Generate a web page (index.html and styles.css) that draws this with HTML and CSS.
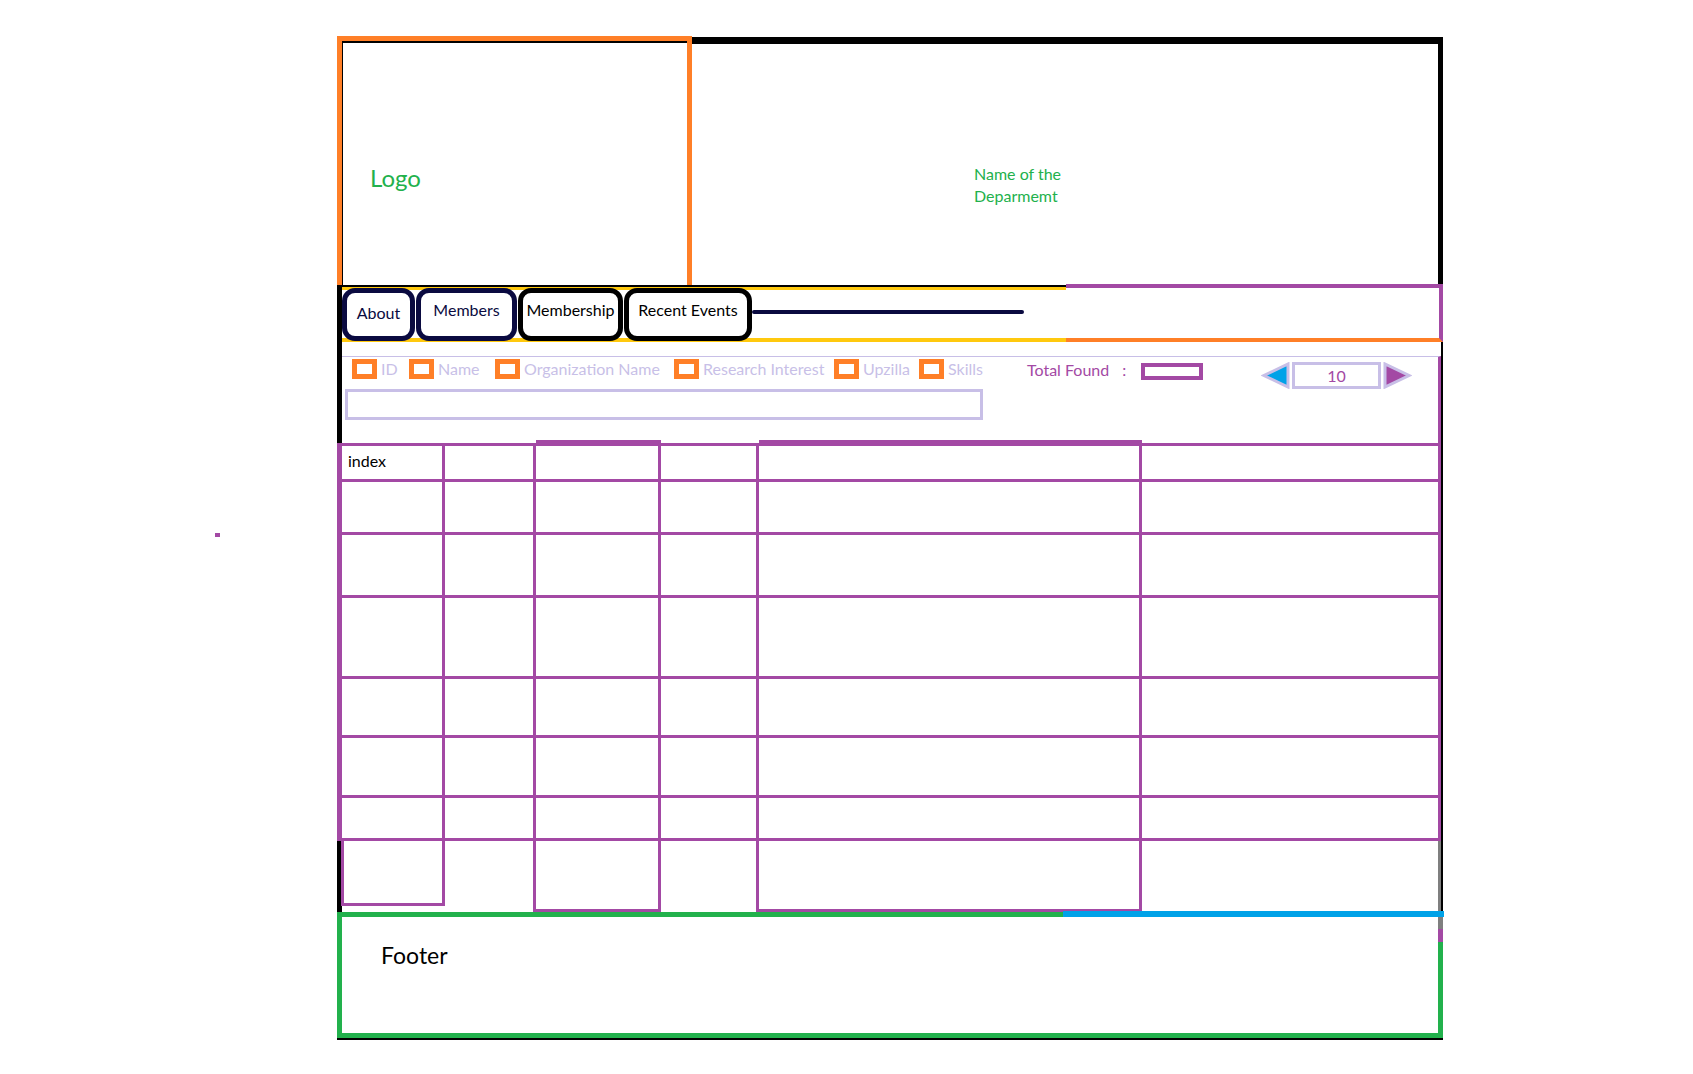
FILE: index.html
```html
<!DOCTYPE html>
<html lang="en">
<head>
<meta charset="utf-8">
<title>Department Members</title>
<link rel="stylesheet" href="styles.css">
</head>
<body>
<div class="dot"></div>
<div class="page">
  <header class="header">
    <div class="logo">Logo</div>
    <div class="dept">Name of the<br>Deparmemt</div>
  </header>
  <nav class="nav">
    <div class="tabs">
      <a class="tab tab-about navy">About</a>
      <a class="tab tab-members navy">Members</a>
      <a class="tab tab-membership">Membership</a>
      <a class="tab tab-events">Recent Events</a>
      <span class="nav-line"></span>
    </div>
    <div class="nav-right"></div>
  </nav>
  <main class="main">
    <section class="filters">
      <div class="filter-row">
        <label class="opt w-id"><span class="box"></span><span class="lbl">ID</span></label>
        <label class="opt w-name"><span class="box"></span><span class="lbl">Name</span></label>
        <label class="opt w-org"><span class="box"></span><span class="lbl">Organization Name</span></label>
        <label class="opt w-res"><span class="box"></span><span class="lbl">Research Interest</span></label>
        <label class="opt w-upz"><span class="box"></span><span class="lbl">Upzilla</span></label>
        <label class="opt w-skl"><span class="box"></span><span class="lbl">Skills</span></label>
        <span class="total">Total Found<span class="colon">:</span></span>
        <span class="found"></span>
        <div class="pager">
          <svg class="arrow" width="29" height="27" viewBox="0 0 29 27"><polygon points="27,2 27,25 3,13.5" fill="#00a2e8" stroke="#c8bfe7" stroke-width="3"/></svg>
          <span class="page-num">10</span>
          <svg class="arrow" width="29" height="27" viewBox="0 0 29 27"><polygon points="2,2 2,25 26,13.5" fill="#a349a4" stroke="#c8bfe7" stroke-width="3"/></svg>
        </div>
      </div>
      <div class="search"></div>
    </section>
    <div class="grid">
      <div class="cell top first">index</div><div class="cell top"></div><div class="cell top thick"></div><div class="cell top"></div><div class="cell top thick"></div><div class="cell top"></div>
      <div class="cell first"></div><div class="cell"></div><div class="cell"></div><div class="cell"></div><div class="cell"></div><div class="cell"></div>
      <div class="cell first"></div><div class="cell"></div><div class="cell"></div><div class="cell"></div><div class="cell"></div><div class="cell"></div>
      <div class="cell first"></div><div class="cell"></div><div class="cell"></div><div class="cell"></div><div class="cell"></div><div class="cell"></div>
      <div class="cell first"></div><div class="cell"></div><div class="cell"></div><div class="cell"></div><div class="cell"></div><div class="cell"></div>
      <div class="cell first"></div><div class="cell"></div><div class="cell"></div><div class="cell"></div><div class="cell"></div><div class="cell"></div>
      <div class="cell first"></div><div class="cell"></div><div class="cell"></div><div class="cell"></div><div class="cell"></div><div class="cell"></div>
      <div class="cell short"></div><div class="cell open"></div><div class="cell"></div><div class="cell open"></div><div class="cell"></div><div class="cell open last"></div>
    </div>
  </main>
  <footer class="footer">Footer</footer>
</div>
</body>
</html>
```

FILE: styles.css
```css
* { box-sizing: border-box; }

html, body {
  margin: 0;
  padding: 0;
  background: #ffffff;
}

body {
  position: relative;
  font-family: "Lato", "Open Sans", "Liberation Sans", sans-serif;
  color: #000;
  height: 1074px;
  overflow: hidden;
}

.dot {
  position: absolute;
  left: 215px;
  top: 533px;
  width: 5px;
  height: 4px;
  background: #a349a4;
}

.page {
  margin-left: 337px;
  padding-top: 36px;
  width: 1106px;
}

/* Header */
.header {
  display: flex;
  height: 251px;
  border-bottom: 2px solid #000;
}

.logo {
  width: 355px;
  border: 5px solid #ff7f27;
  border-bottom: none;
  box-shadow: inset 1px 0 0 #000, inset 0 2px 0 #000;
  padding: 122px 0 0 28px;
  font-size: 24px;
  line-height: 30px;
  color: #22b14c;
}

.dept {
  flex: 1;
  margin-top: 1px;
  border-top: 7px solid #000;
  border-right: 5px solid #000;
  padding: 119px 0 0 282px;
  font-size: 16px;
  line-height: 22px;
  color: #22b14c;
}

/* Nav */
.nav {
  display: flex;
  height: 55px;
}

.tabs {
  width: 729px;
  display: flex;
  align-items: flex-start;
  gap: 1px;
  border-left: 5px solid #000;
  background: linear-gradient(to bottom, #ffc90e 0 3px, transparent 3px 51px, #ffc90e 51px 55px);
}

.tab {
  display: block;
  margin-top: 1px;
  height: 53px;
  border: 5px solid #000;
  border-radius: 13px;
  background: #fff;
  text-align: center;
  padding-top: 7px;
  font-size: 16px;
  line-height: 20px;
  color: #000;
  cursor: pointer;
}

.tab.navy {
  border-color: #0a0a40;
  color: #0a0a40;
}

.tab-about { width: 73px; padding-top: 10px; }
.tab-members { width: 101px; }
.tab-membership { width: 105px; }
.tab-events { width: 128px; }

.nav-line {
  display: block;
  width: 272px;
  height: 4px;
  margin-top: 23px;
  margin-left: -1px;
  background: #0a0a40;
  border-radius: 2px;
}

.nav-right {
  flex: 1;
  margin-top: -3px;
  height: 58px;
  border-top: 4px solid #a349a4;
  border-right: 4px solid #a349a4;
  border-bottom: 4px solid #ff7f27;
}

/* Main */
.main {
  display: flow-root;
  padding-top: 14px;
  border-left: 5px solid #000;
  border-right: 2px solid #000;
}

.filters {
  border-top: 1px solid #c8bfe7;
  border-right: 3px solid #a349a4;
  padding-bottom: 23px;
}

.filter-row {
  display: flex;
  align-items: flex-start;
  height: 32px;
  padding-left: 10px;
}

.opt {
  display: flex;
  align-items: flex-start;
  gap: 4px;
}

.w-id { width: 57px; }
.w-name { width: 86px; }
.w-org { width: 179px; }
.w-res { width: 160px; }
.w-upz { width: 85px; }
.w-skl { width: 108px; }

.box {
  display: block;
  width: 25px;
  height: 20px;
  margin-top: 2px;
  border: 5px solid #ff7f27;
  background: #fff;
}

.lbl {
  margin-top: 2px;
  font-size: 16px;
  line-height: 20px;
  color: #c8bfe7;
  white-space: nowrap;
}

.total {
  width: 114px;
  margin-top: 3px;
  font-size: 16px;
  line-height: 20px;
  color: #a349a4;
  white-space: nowrap;
}

.colon {
  margin-left: 13px;
}

.found {
  display: block;
  width: 62px;
  height: 17px;
  margin-top: 6px;
  border: 4px solid #a349a4;
}

.pager {
  display: flex;
  align-items: center;
  margin-left: 58px;
  margin-top: 5px;
  gap: 2px;
}

.arrow { display: block; }

.page-num {
  display: block;
  width: 89px;
  height: 27px;
  border: 3px solid #c8bfe7;
  text-align: center;
  font-size: 16px;
  line-height: 20px;
  padding-top: 1px;
  color: #a349a4;
}

.search {
  margin-left: 3px;
  width: 638px;
  height: 31px;
  border: 3px solid #c8bfe7;
}

/* Table grid */
.grid {
  display: grid;
  margin-left: -5px;
  grid-template-columns: 108px 91px 125px 98px 383px 299px;
  grid-template-rows: 39px 53px 63px 81px 59px 60px 43px 71px;
}

.cell {
  border-right: 3px solid #a349a4;
  border-bottom: 3px solid #a349a4;
  font-size: 16px;
  line-height: 20px;
  color: #000;
}

.cell.first {
  border-left: 5px solid #a349a4;
}

.cell.top {
  border-top: 3px solid #a349a4;
  padding: 5px 0 0 6px;
}

.cell.top.thick {
  border-top-width: 6px;
  margin-top: -3px;
}

.cell.short {
  align-self: start;
  height: 65px;
  margin-left: 4px;
  border-left: 3px solid #a349a4;
}

.cell.open {
  border-bottom: none;
}

.cell.last {
  border-right-color: #7f7f7f;
}

/* Footer */
.footer {
  position: relative;
  height: 126px;
  border: 5px solid #22b14c;
  box-shadow: 0 2px 0 #000;
  padding: 24px 0 0 39px;
  font-size: 23px;
  line-height: 28px;
  color: #000;
}

.footer::before {
  content: "";
  position: absolute;
  top: -6px;
  left: 721px;
  right: -6px;
  height: 6px;
  background: #00a2e8;
}

.footer::after {
  content: "";
  position: absolute;
  top: 0;
  right: -5px;
  width: 5px;
  height: 25px;
  background: linear-gradient(#7f7f7f 0 12px, #a349a4 12px);
}
```
